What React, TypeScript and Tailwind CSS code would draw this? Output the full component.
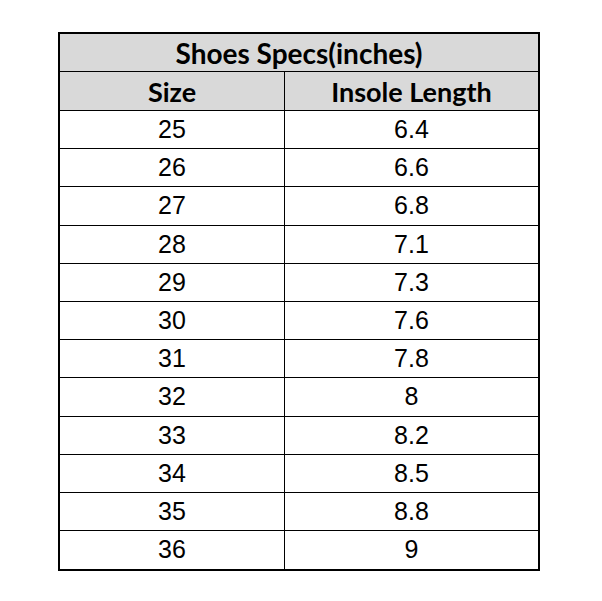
const rows = [
  ["25", "6.4"],
  ["26", "6.6"],
  ["27", "6.8"],
  ["28", "7.1"],
  ["29", "7.3"],
  ["30", "7.6"],
  ["31", "7.8"],
  ["32", "8"],
  ["33", "8.2"],
  ["34", "8.5"],
  ["35", "8.8"],
  ["36", "9"],
];

export default function App() {
  return (
    <div className="w-[602px] h-[601px] bg-white pt-[32px] pl-[58px]">
      <div className="w-[482px] border-2 border-black text-black">
        {/* title */}
        <div className="h-[38px] flex items-center justify-center bg-[#d9d9d9] border-b border-black font-['Lato',sans-serif] font-bold text-[28px]">
          Shoes Specs(inches)
        </div>
        {/* column heads */}
        <div className="grid grid-cols-[225px_1fr] h-[39px] bg-[#d9d9d9] border-b border-black font-['Lato',sans-serif] font-bold text-[27px]">
          <div className="flex items-center justify-center border-r border-black">Size</div>
          <div className="flex items-center justify-center">Insole Length</div>
        </div>
        {rows.map(([size, len], i) => (
          <div
            key={size}
            className={`grid grid-cols-[225px_1fr] h-[38.2px] font-['Liberation_Sans',Arial,sans-serif] text-[25px] ${
              i < rows.length - 1 ? "border-b border-black" : ""
            }`}
          >
            <div className="flex items-center justify-center border-r border-black">{size}</div>
            <div className="flex items-center justify-center">{len}</div>
          </div>
        ))}
      </div>
    </div>
  );
}
